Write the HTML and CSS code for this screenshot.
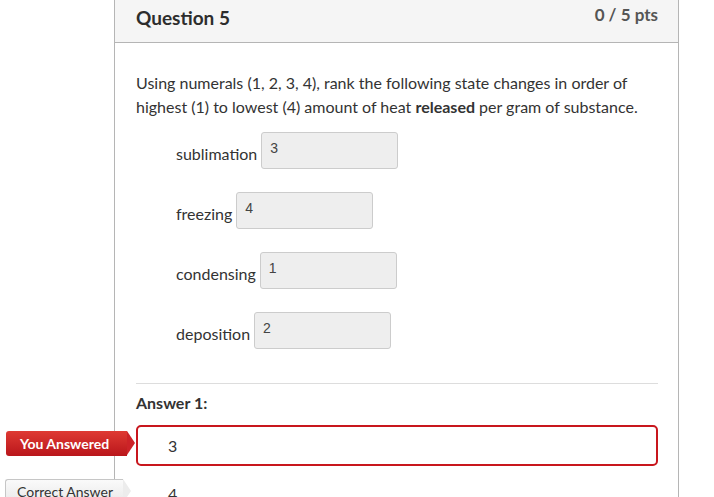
FILE: index.html
```html
<!DOCTYPE html>
<html>
<head>
<meta charset="utf-8">
<link rel="stylesheet" href="styles.css">
</head>
<body>
<div class="page">
  <div class="card">
    <div class="card-header">
      <h2 class="q-title">Question 5</h2>
      <span class="q-pts">0 / 5 pts</span>
    </div>
    <div class="card-body">
      <p class="q-text">Using numerals (1, 2, 3, 4), rank the following state changes in order of highest (1) to lowest (4) amount of heat <strong>released</strong> per gram of substance.</p>
      <div class="blanks">
        <div class="blank-row"><span class="blank-label">sublimation</span><span class="blank-box">3</span></div>
        <div class="blank-row"><span class="blank-label">freezing</span><span class="blank-box">4</span></div>
        <div class="blank-row"><span class="blank-label">condensing</span><span class="blank-box">1</span></div>
        <div class="blank-row"><span class="blank-label">deposition</span><span class="blank-box">2</span></div>
      </div>
      <hr class="divider">
      <div class="answer-title">Answer 1:</div>
      <div class="answer-row">
        <span class="tag tag-wrong">You Answered</span>
        <div class="answer-box wrong">3</div>
      </div>
      <div class="answer-row">
        <span class="tag tag-correct">Correct Answer</span>
        <div class="answer-box correct">4</div>
      </div>
    </div>
  </div>
</div>
</body>
</html>
```
FILE: styles.css
```css
html, body {
  margin: 0;
  padding: 0;
  background: #fff;
  overflow: hidden;
}
body {
  font-family: Lato, "Open Sans", sans-serif;
  color: #333;
  height: 497px;
}
.page {
  padding-left: 114px;
  width: 565px;
}
.card {
  border-left: 1px solid #b5b5b5;
  border-right: 1px solid #b5b5b5;
  height: 497px;
}
.card-header {
  height: 42px;
  background: #f5f5f5;
  border-bottom: 1px solid #b5b5b5;
  display: flex;
  align-items: center;
  justify-content: space-between;
  padding: 0 20px 0 21px;
}
.q-title {
  margin: 0;
  font-size: 19px;
  font-weight: 700;
  color: #2d2d2d;
  margin-top: -8px;
}
.q-pts {
  font-size: 17px;
  font-weight: 700;
  color: #555;
  margin-top: -14px;
}
.card-body {
  padding: 28px 20px 0 21px;
}
.q-text {
  margin: 0;
  font-size: 16px;
  line-height: 24px;
  color: #333;
}
.q-text strong { font-weight: 700; }
.blanks {
  margin-top: 13px;
  padding-left: 40px;
  display: flex;
  flex-direction: column;
  gap: 23px;
}
.blank-row {
  display: flex;
  align-items: center;
  gap: 4px;
}
.blank-label {
  font-size: 16px;
  line-height: 20px;
  margin-top: 6px;
  color: #333;
}
.blank-box {
  box-sizing: border-box;
  width: 137px;
  height: 37px;
  background: #eee;
  border: 1px solid #ccc;
  border-radius: 3px;
  padding: 7px 8px;
  font-family: "Liberation Sans", Arial, sans-serif;
  font-size: 14px;
  line-height: 16px;
  color: #444;
}
.divider {
  border: 0;
  border-top: 1px solid #ddd;
  margin: 34px 0 9px 0;
}
.answer-title {
  font-size: 16px;
  font-weight: 700;
  line-height: 20px;
}
.answer-row {
  position: relative;
}
.answer-box {
  box-sizing: border-box;
  height: 41px;
  display: flex;
  align-items: center;
  padding-left: 30px;
  font-size: 16px;
  color: #333;
}
.answer-box.wrong {
  margin-top: 12px;
  border: 2px solid #c8161d;
  border-radius: 5px;
}
.answer-box.correct {
  margin-top: 7px;
  padding-left: 32px;
  align-items: flex-start;
  padding-top: 11px;
}
.tag {
  position: absolute;
  left: -130px;
  height: 25px;
  width: 121px;
  box-sizing: border-box;
  font-size: 14px;
  font-weight: 700;
  line-height: 25px;
  padding-left: 14px;
  border-radius: 3px 0 0 3px;
}
.tag::after {
  content: "";
  position: absolute;
  top: 0;
  right: -8px;
  border-top: 12.5px solid transparent;
  border-bottom: 12.5px solid transparent;
  border-left: 8px solid #c42026;
}
.tag-wrong {
  top: 6px;
  background: linear-gradient(#df3a33, #b9161b);
  color: #fff;
}
.tag-wrong::after {
  border-left-color: #cc2328;
}
.tag-correct {
  top: 6px;
  left: -131px;
  width: 118px;
  padding-left: 11px;
  font-weight: 400;
  color: #333;
  background: linear-gradient(#fafafa, #e9e9e9);
  border: 1px solid #c6c6c6;
  border-right: 0;
  line-height: 23px;
}
.tag-correct::after {
  top: -1px;
  border-left-color: #ececec;
}
```
